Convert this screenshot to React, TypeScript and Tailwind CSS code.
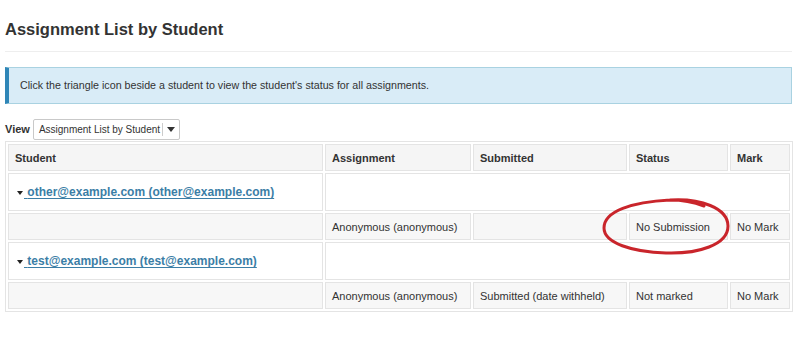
import React from "react";

const students = [
  {
    name: "other@example.com (other@example.com)",
    rows: [
      {
        assignment: "Anonymous (anonymous)",
        submitted: "",
        status: "No Submission",
        mark: "No Mark",
      },
    ],
  },
  {
    name: "test@example.com (test@example.com)",
    rows: [
      {
        assignment: "Anonymous (anonymous)",
        submitted: "Submitted (date withheld)",
        status: "Not marked",
        mark: "No Mark",
      },
    ],
  },
];

const cell = "border border-[#e4e4e4] px-[6px] py-0 align-middle";

export default function App() {
  return (
    <div className="relative w-[800px] h-[338px] bg-white text-[#333] font-['Liberation_Sans',Arial,sans-serif] px-[5px] pt-[19px] overflow-hidden">
      <h1 className="text-[16.5px] font-bold leading-[20px] text-[#333] pb-[12px] border-b border-[#eeeeee] mr-[3px]">
        Assignment List by Student
      </h1>

      <div className="mt-[15px] mr-[3px] h-[37px] flex items-center bg-[#d9ecf7] border border-[#a9d2e1] border-l-[4px] border-l-[#2f86b7] pl-[11px] text-[10.7px]">
        Click the triangle icon beside a student to view the student's status for all assignments.
      </div>

      <div className="mt-[15px] flex items-center gap-[3px]">
        <span className="text-[11px] font-bold">View</span>
        <div className="h-[21px] w-[147px] flex items-center border border-[#c9c9c9] rounded-[2px] bg-white text-[10px] whitespace-nowrap">
          <span className="pl-[5px] flex-1">Assignment List by Student</span>
          <span className="h-[13px] w-px bg-[#cccccc]" />
          <span className="w-[16px] flex justify-center">
            <svg width="8" height="5" viewBox="0 0 8 5">
              <path d="M0 0h8L4 5z" fill="#333" />
            </svg>
          </span>
        </div>
      </div>

      <table className="mt-[1px] w-[788px] border border-[#e4e4e4] border-separate border-spacing-[2px] text-[11px] leading-[14px]">
        <thead>
          <tr className="h-[27px]">
            <th className={`${cell} bg-[#f5f5f5] text-left font-bold w-[315px]`}>Student</th>
            <th className={`${cell} bg-[#f5f5f5] text-left font-bold w-[146px]`}>Assignment</th>
            <th className={`${cell} bg-[#f5f5f5] text-left font-bold w-[154px]`}>Submitted</th>
            <th className={`${cell} bg-[#f5f5f5] text-left font-bold w-[99px]`}>Status</th>
            <th className={`${cell} bg-[#f5f5f5] text-left font-bold`}>Mark</th>
          </tr>
        </thead>
        <tbody>
          {students.map((s) => (
            <React.Fragment key={s.name}>
              <tr className="h-[38px]">
                <td className={`${cell} pl-[8px]`}>
                  <span className="text-[12px] font-bold whitespace-nowrap">
                    <svg width="6" height="4" viewBox="0 0 6 4" className="inline-block align-middle mr-[1px]">
                      <path d="M0 0h6L3 4z" fill="#222" />
                    </svg>
                    <a href="#" className="text-[#3b7ea6] underline underline-offset-[2px]">
                      {"\u00a0"}
                      {s.name}
                    </a>
                  </span>
                </td>
                <td className={cell} colSpan={4} />
              </tr>
              {s.rows.map((r, i) => (
                <tr key={i} className="h-[27px] bg-[#f7f7f7]">
                  <td className={cell} />
                  <td className={cell}>{r.assignment}</td>
                  <td className={cell}>{r.submitted}</td>
                  <td className={cell}>{r.status}</td>
                  <td className={cell}>{r.mark}</td>
                </tr>
              ))}
            </React.Fragment>
          ))}
        </tbody>
      </table>

      <svg
        className="absolute left-[598px] top-[195px] pointer-events-none"
        width="136"
        height="64"
        viewBox="0 0 136 64"
      >
        <path
          d="M72 5 C102 3 130 13 130 31 C130 50 100 59 68 58 C34 57 6 48 6 33 C6 16 34 7 72 5 C86 5 98 8 106 11"
          fill="none"
          stroke="#c9252b"
          strokeWidth="3"
          strokeLinecap="round"
        />
      </svg>
    </div>
  );
}
